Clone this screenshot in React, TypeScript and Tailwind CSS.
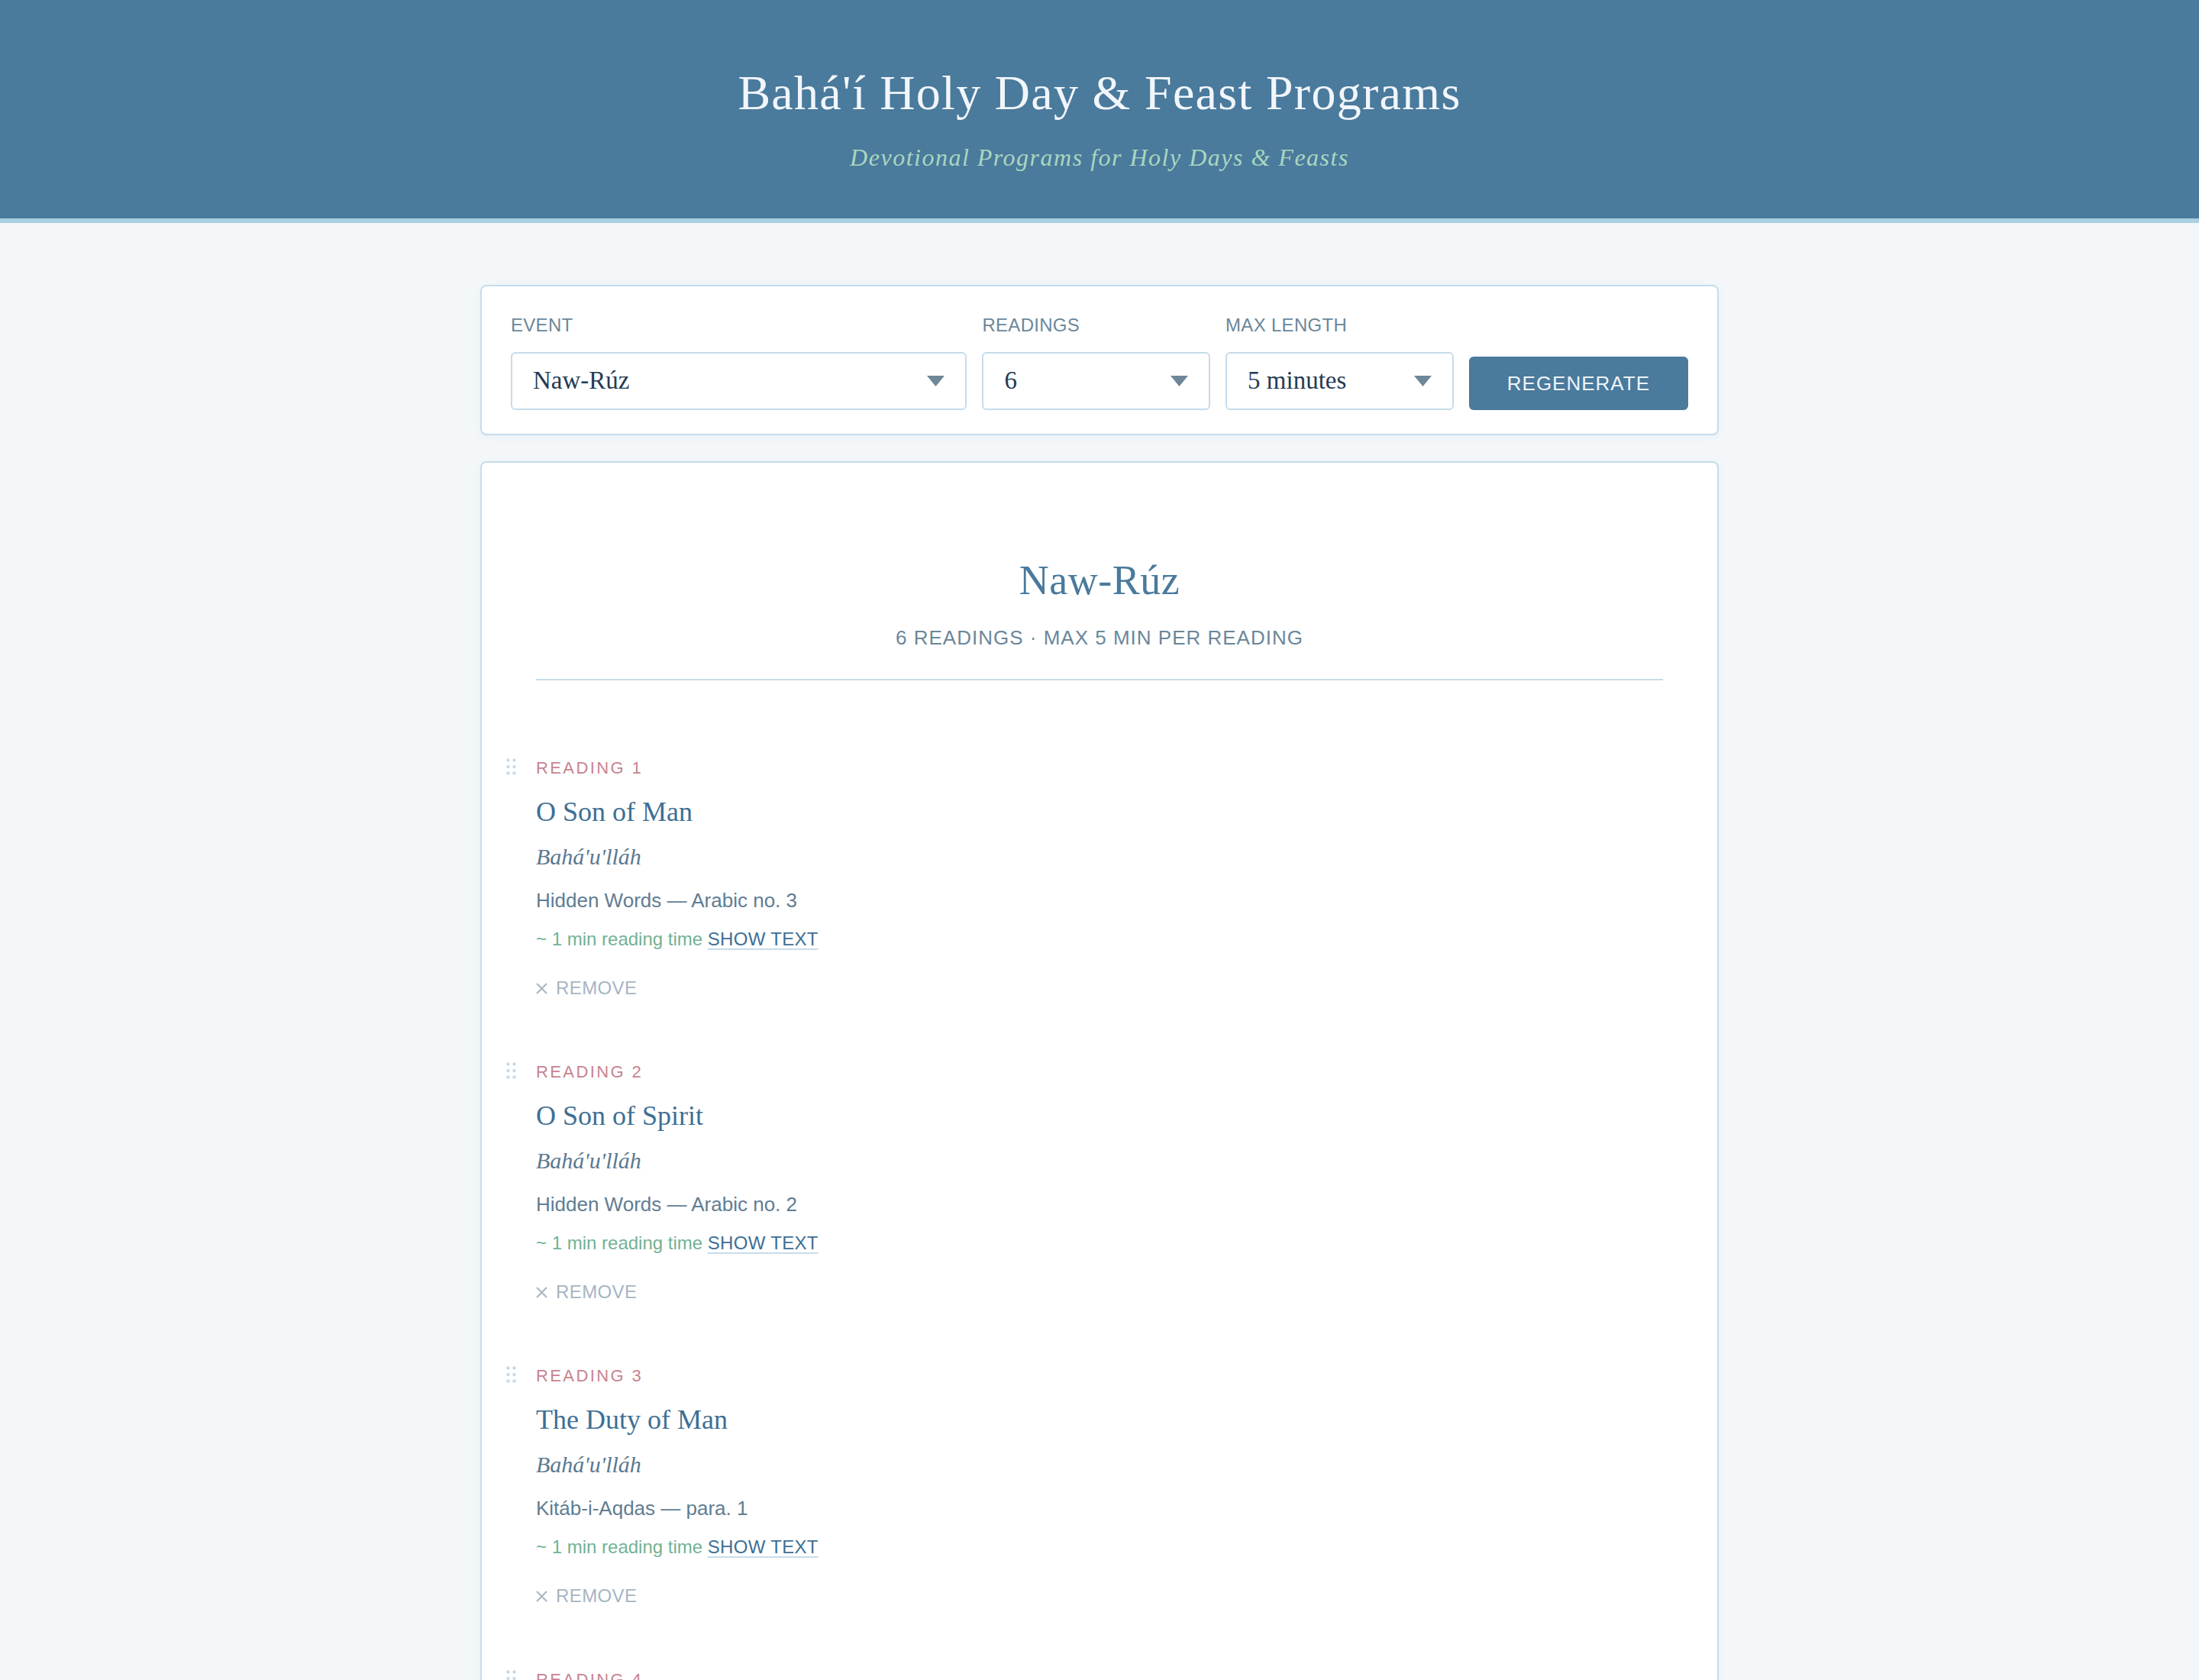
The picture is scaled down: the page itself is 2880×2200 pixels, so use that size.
const serif = "font-['Liberation_Serif','Times_New_Roman',serif]";
const sans = "font-['Liberation_Sans',Arial,sans-serif]";

const readings = [
  { n: 1, title: "O Son of Man", author: "Bahá'u'lláh", source: "Hidden Words — Arabic no. 3" },
  { n: 2, title: "O Son of Spirit", author: "Bahá'u'lláh", source: "Hidden Words — Arabic no. 2" },
  { n: 3, title: "The Duty of Man", author: "Bahá'u'lláh", source: "Kitáb-i-Aqdas — para. 1" },
  { n: 4, title: "O Son of Being", author: "Bahá'u'lláh", source: "Hidden Words — Arabic no. 5" },
  { n: 5, title: "Prayer for the New Year", author: "'Abdu'l-Bahá", source: "Bahá'í Prayers — Naw-Rúz" },
  { n: 6, title: "The Spring Season", author: "'Abdu'l-Bahá", source: "Paris Talks — no. 9" },
];

function Select({ value }: { value: string }) {
  return (
    <div className="h-[76px] border-2 border-[#c6dcea] rounded-[6px] bg-white flex items-center justify-between pl-[27px] pr-[27px]">
      <span className={`${serif} text-[33px] text-[#243b53]`}>{value}</span>
      <svg width="23" height="14" viewBox="0 0 23 14">
        <polygon points="0,0 23,0 11.5,14" fill="#6e8799" />
      </svg>
    </div>
  );
}

function Field({ label, value }: { label: string; value: string }) {
  return (
    <div className="flex flex-col">
      <label className={`${sans} text-[24px] leading-[36px] tracking-[0.3px] text-[#6b8799]`}>{label}</label>
      <div className="mt-[17px]">
        <Select value={value} />
      </div>
    </div>
  );
}

function DragHandle() {
  return (
    <svg className="mt-[3px] mr-[25px] shrink-0" width="14" height="22" viewBox="0 0 14 22">
      {[2.5, 11, 19.5].map((y) =>
        [2.5, 10.5].map((x) => <circle key={`${x}-${y}`} cx={x} cy={y} r="2.2" fill="#c6dcea" />)
      )}
    </svg>
  );
}

function Reading({ r }: { r: (typeof readings)[number] }) {
  return (
    <div className="flex -ml-[39px] mb-[78px]">
      <DragHandle />
      <div className="flex flex-col items-start">
        <div className={`${sans} text-[22px] leading-[32px] tracking-[2.4px] text-[#c8838f]`}>READING {r.n}</div>
        <h3 className={`${serif} mt-[17px] text-[36px] leading-[48px] text-[#3e6f94]`}>{r.title}</h3>
        <div className={`${serif} italic mt-[15px] text-[30px] leading-[40px] text-[#5a7890]`}>{r.author}</div>
        <div className={`${sans} mt-[19px] text-[26px] leading-[36px] text-[#5f7d92]`}>{r.source}</div>
        <div className={`${sans} mt-[17px] text-[24px] leading-[32px]`}>
          <span className="text-[#72b294]">~ 1 min reading time </span>
          <a className="text-[#3e6f94] tracking-[0.3px] underline decoration-2 decoration-[#c6dcea] underline-offset-[4px]">SHOW TEXT</a>
        </div>
        <button className={`${sans} mt-[32px] flex items-center gap-[11px] text-[24px] leading-[32px] tracking-[0.4px] text-[#a5b6c3]`}>
          <svg width="15" height="15" viewBox="0 0 15 15">
            <path d="M1 1 L14 14 M14 1 L1 14" stroke="#a5b6c3" strokeWidth="2" />
          </svg>
          REMOVE
        </button>
      </div>
    </div>
  );
}

export default function App() {
  return (
    <div className="min-h-screen bg-[#f3f7fa]">
      <header className="bg-[#4a7a9c] border-b-[6px] border-[#a9cfe2] pt-[84px] pb-[60px] text-center">
        <h1 className={`${serif} text-[64px] leading-[76px] tracking-[1.3px] text-[#f1f6fb]`}>
          Bahá'í Holy Day &amp; Feast Programs
        </h1>
        <p className={`${serif} italic mt-[26px] text-[32px] leading-[40px] tracking-[1.5px] text-[#a9d6c0]`}>
          Devotional Programs for Holy Days &amp; Feasts
        </p>
      </header>

      <main className="w-[1622px] mx-auto pt-[81px] pb-[80px]">
        <section className="bg-white border-2 border-[#c6dcea] rounded-[8px] shadow-[0_2px_10px_rgba(40,70,100,0.05)] px-[38px] pt-[33px] pb-[31px]">
          <div className="grid grid-cols-[2fr_1fr_1fr_auto] gap-[20px] items-end">
            <Field label="EVENT" value="Naw-Rúz" />
            <Field label="READINGS" value="6" />
            <Field label="MAX LENGTH" value="5 minutes" />
            <button className={`${sans} h-[70px] px-[50px] rounded-[6px] bg-[#4a7a9c] text-[26px] tracking-[1px] text-[#eef4fa]`}>
              REGENERATE
            </button>
          </div>
        </section>

        <section className="mt-[34px] bg-white border-2 border-[#c6dcea] rounded-[8px] shadow-[0_2px_10px_rgba(40,70,100,0.05)] px-[71px] pt-[122px] pb-[40px]">
          <div className="text-center">
            <h2 className={`${serif} text-[54px] leading-[64px] tracking-[0.5px] text-[#4a7a9c]`}>Naw-Rúz</h2>
            <p className={`${sans} mt-[24px] text-[26px] leading-[38px] tracking-[1px] text-[#6b8799]`}>
              6 READINGS · MAX 5 MIN PER READING
            </p>
          </div>
          <div className="mt-[35px] h-[2px] bg-[#c6dcea]" />
          <div className="mt-[99px]">
            {readings.map((r) => (
              <Reading key={r.n} r={r} />
            ))}
          </div>
        </section>
      </main>
    </div>
  );
}
